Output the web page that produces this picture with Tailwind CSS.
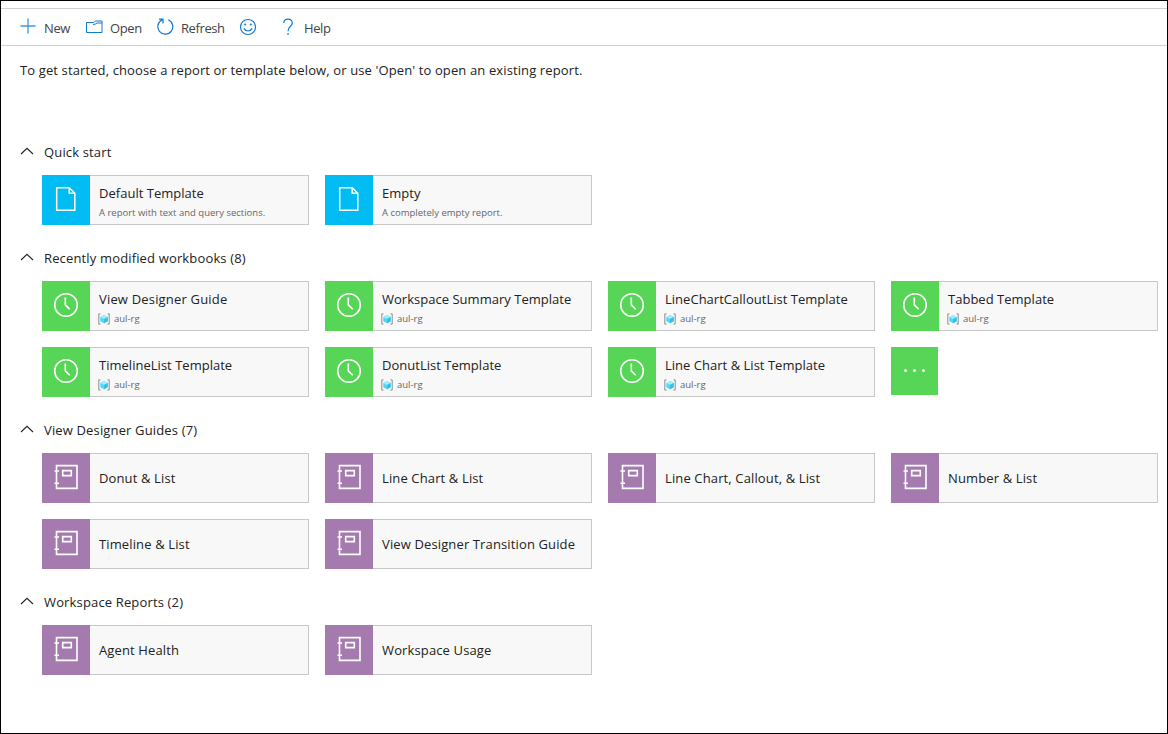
<!DOCTYPE html>
<html lang="en">
<head>
<meta charset="utf-8">
<title>Workbooks</title>
<script src="https://cdn.jsdelivr.net/npm/@tailwindcss/browser@4"></script>
</head>
<body>
<svg class="hidden">
  <symbol id="doc" viewBox="0 0 22 26"><path d="M1.700 1.700h12.500l5.600 5.600v17H1.700z M14.200 1.700v5.600h5.600" fill="none" stroke="#fff" stroke-width="1.500"/></symbol>
  <symbol id="clock" viewBox="0 0 26 26"><circle cx="13" cy="13" r="11.3" fill="none" stroke="#fff" stroke-width="1.6"/><path d="M12.3 5.5v7.3l4.4 4.4" fill="none" stroke="#fff" stroke-width="1.6"/></symbol>
  <symbol id="book" viewBox="0 0 26 26"><path d="M3.500 1.600h20.500v22.800H3.500z M9.700 6.600h8.600v5H9.700z M1.500 7h4.500 M1.500 19.300h4.500" fill="none" stroke="#fff" stroke-width="1.600"/></symbol>
  <symbol id="group" viewBox="0 0 12 12"><path d="M2.500 .9H.8v10.200h1.700 M9.500 .9h1.700v10.200H9.500" fill="none" stroke="#8c8c8c" stroke-width="1"/><path d="M6 2l3.700 1.900v4.300L6 10.200 2.300 8.200V3.900z" fill="#50d8f5"/><path d="M2.300 3.900L6 2l3.700 1.900L6 6z" fill="#9eeefc"/><path d="M6 6l3.700-2.100v4.300L6 10.200z" fill="#32bfe8"/></symbol>
  <symbol id="caret" viewBox="0 0 14 8"><path d="M1 7l6-5.700L13 7" fill="none" stroke="#222" stroke-width="1.100"/></symbol>
</svg>
<div class="flex h-[734px] w-[1168px] flex-col overflow-hidden border border-black bg-white font-['Open_Sans','Noto_Sans',sans-serif] text-[13px] leading-5 text-[#222]">
  <div class="mt-[7px] flex h-[38px] shrink-0 items-center border-y border-[#d0d0d0] pl-[19px] tracking-[-0.4px] text-[#444]">
    <svg class="mr-2 h-4 w-4 -translate-y-px" viewBox="0 0 16 16"><path d="M8 .5v15M.5 8h15" stroke="#3d96de" stroke-width="1.3"/></svg>
    <span class="w-[42px] pt-0.5">New</span>
    <svg class="mr-[7px] h-4 w-[17px]" viewBox="0 0 17 16"><path d="M.5 3.500h7l2-1.500h6.500v11.500H.5z M7 5.500l2.500-.5L11 4h5" fill="none" stroke="#0f7ad4" stroke-width="1"/></svg>
    <span class="w-[47px] pt-0.5">Open</span>
    <svg class="mr-[7px] h-[18px] w-[17px]" viewBox="0 0 17 18"><path d="M11.200 1.800A7.500 7.500 0 1 1 5.200 1.900M2 1.200h4v4.300" fill="none" stroke="#0f7ad4" stroke-width="1.200"/></svg>
    <span class="w-[58px] pt-0.5">Refresh</span>
    <svg class="mr-[25px] h-[18px] w-[18px]" viewBox="0 0 18 18"><circle cx="9" cy="9" r="7.500" fill="none" stroke="#0f7ad4" stroke-width="1.200"/><path d="M4.800 10.500q4.200 5 8.400 0" fill="none" stroke="#0f7ad4" stroke-width="1.200"/><circle cx="6.200" cy="6.500" r="1" fill="#0f7ad4"/><circle cx="11.800" cy="6.500" r="1" fill="#0f7ad4"/></svg>
    <svg class="mr-[10px] h-[18px] w-[12px]" viewBox="0 0 12 18"><path d="M1.800 5C1.800-.2 10.300-.2 10.300 4.900 10.300 8.300 6 8.300 6 13.200" fill="none" stroke="#0f7ad4" stroke-width="1.200"/><path d="M5.300 15.300h1.500v1.500H5.300z" fill="#0f7ad4"/></svg>
    <span class="pt-0.5">Help</span>
  </div>
  <p class="ml-[19px] mt-[14px] tracking-[0.12px]">To get started, choose a report or template below, or use 'Open' to open an existing report.</p>
  <main id="main" class="mt-[62px] flex flex-col gap-[23px]"></main>
</div>
<script>
const rg = 'aul-rg';
const sections = [
  ['Quick start', 'doc', 'bg-[#00bcf2]', [['Default Template', 'A report with text and query sections.'], ['Empty', 'A completely empty report.']]],
  ['Recently modified workbooks (8)', 'clock', 'bg-[#57d557]', [['View Designer Guide', rg], ['Workspace Summary Template', rg], ['LineChartCalloutList Template', rg], ['Tabbed Template', rg], ['TimelineList Template', rg], ['DonutList Template', rg], ['Line Chart &amp; List Template', rg], null]],
  ['View Designer Guides (7)', 'book', 'bg-[#a57aaf]', [['Donut &amp; List'], ['Line Chart &amp; List'], ['Line Chart, Callout, &amp; List'], ['Number &amp; List'], ['Timeline &amp; List'], ['View Designer Transition Guide']]],
  ['Workspace Reports (2)', 'book', 'bg-[#a57aaf]', [['Agent Health'], ['Workspace Usage']]]
];
const iconSize = { doc: 'h-[26px] w-[22px]', clock: 'h-[26px] w-[26px]', book: 'h-[26px] w-[26px]' };
const card = (item, icon, color) => {
  if (!item) return `<div class="flex h-12 w-[47px] items-center justify-center gap-[6px] pb-0.5 ${color}">${'<i class="h-[3px] w-[3px] rounded-full bg-white"></i>'.repeat(3)}</div>`;
  const [title, sub] = item;
  const mark = sub === rg ? '<svg class="-ml-px mr-1 h-3 w-3"><use href="#group"/></svg>' : '';
  const tracking = !sub ? 'tracking-[0.13px]' : title.startsWith('View') ? 'tracking-[0.18px]' : 'tracking-[0.02px]';
  return `<div class="flex h-[50px] w-[267px]">
    <div class="flex w-12 items-center justify-center pb-0.5 ${color}"><svg class="${iconSize[icon]}"><use href="#${icon}"/></svg></div>
    <div class="flex flex-1 flex-col border border-l-0 border-[#c8c8c8] bg-[#f8f8f8] pl-[9px] ${sub ? 'pt-[7px]' : 'justify-center'}">
      <div class="${tracking} whitespace-nowrap">${title}</div>
      ${sub ? `<div class="mt-px flex h-[18px] items-center whitespace-nowrap text-[9.5px] text-[#666]">${mark}${sub}</div>` : ''}
    </div></div>`;
};
document.getElementById('main').innerHTML = sections.map(([name, icon, color, items]) => `<section>
  <h2 class="mb-[13px] flex items-center pl-[19px] tracking-[0.15px]"><svg class="mr-[10px] h-2 w-[14px] -translate-y-px"><use href="#caret"/></svg>${name}</h2>
  <div class="ml-[41px] grid w-max grid-cols-[repeat(4,267px)] gap-4">${items.map(i => card(i, icon, color)).join('')}</div>
</section>`).join('');
</script>
</body>
</html>
